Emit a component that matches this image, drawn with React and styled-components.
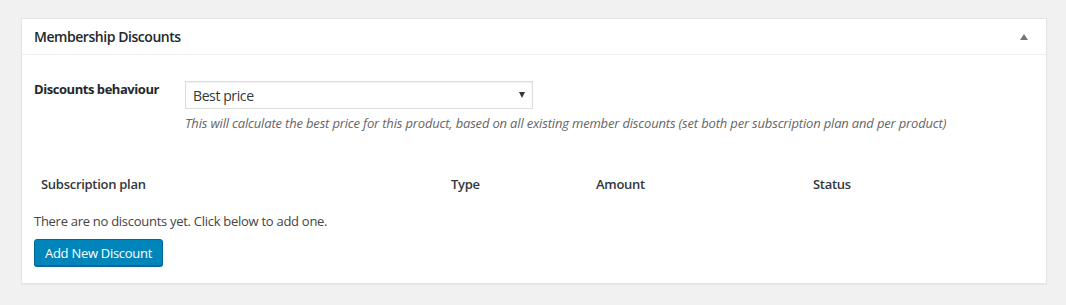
import React from "react";
import styled, { createGlobalStyle } from "styled-components";

const Global = createGlobalStyle`
  html, body { margin: 0; padding: 0; background: #f1f1f1; }
  body { font-family: "Open Sans", "Noto Sans", sans-serif; color: #23282d; font-size: 13px; letter-spacing: -0.28px; }
`;

const Page = styled.div`
  padding: 18px 19px 20px 21px;
`;

const Card = styled.div`
  background: #fff;
  border: 1px solid #e5e5e5;
  box-shadow: 0 1px 1px rgba(0,0,0,0.04);
`;

const Header = styled.div`
  display: flex;
  align-items: center;
  justify-content: space-between;
  height: 35px;
  padding: 0 12px;
  border-bottom: 1px solid #eee;
`;

const Title = styled.h2`
  margin: 0;
  font-size: 14px;
  font-weight: 600;
  letter-spacing: -0.45px;
  color: #23282d;
`;

const Toggle = styled.span`
  width: 0; height: 0;
  border-left: 4px solid transparent;
  border-right: 4px solid transparent;
  border-bottom: 6px solid #72777c;
  margin-right: 6px;
`;

const Body = styled.div`
  padding: 26px 12px 17px;
`;

const FieldRow = styled.div`
  display: flex;
  align-items: flex-start;
`;

const Label = styled.label`
  width: 151px;
  font-size: 13px;
  font-weight: 700;
  letter-spacing: -0.45px;
  line-height: 18px;
  margin-top: -1px;
  color: #23282d;
`;

const FieldCol = styled.div`
  display: flex;
  flex-direction: column;
`;

const Select = styled.div`
  width: 348px;
  height: 28px;
  box-sizing: border-box;
  border: 1px solid #ddd;
  box-shadow: inset 0 1px 2px rgba(0,0,0,0.07);
  display: flex;
  align-items: center;
  justify-content: space-between;
  padding: 0 7px 0 7px;
  font-size: 14px;
  letter-spacing: -0.4px;
  color: #32373c;
`;

const Arrow = styled.span`
  width: 0; height: 0;
  border-left: 3px solid transparent;
  border-right: 3px solid transparent;
  border-top: 6px solid #32373c;
`;

const Desc = styled.p`
  margin: 5px 0 0;
  font-size: 13px;
  font-style: italic;
  letter-spacing: -0.17px;
  color: #666;
  line-height: 18px;
`;

const TableHead = styled.div`
  display: grid;
  grid-template-columns: 410px 145px 217px 1fr;
  margin-top: 43px;
`;

const Th = styled.div`
  padding: 0 7px;
  font-size: 13px;
  font-weight: 600;
  line-height: 18px;
  color: #32373c;
`;

const Empty = styled.p`
  margin: 19px 0 0;
  font-size: 13px;
  line-height: 18px;
  color: #444;
`;

const Button = styled.button`
  margin-top: 9px;
  height: 27px;
  padding: 0 10px;
  background: #0085ba;
  border: 1px solid #006799;
  border-radius: 3px;
  box-shadow: 0 1px 0 #006799;
  color: #fff;
  font-family: inherit;
  letter-spacing: inherit;
  font-size: 13px;
  cursor: pointer;
`;

export default function App() {
  return (
    <>
      <Global />
      <Page>
        <Card>
          <Header>
            <Title>Membership Discounts</Title>
            <Toggle />
          </Header>
          <Body>
            <FieldRow>
              <Label>Discounts behaviour</Label>
              <FieldCol>
                <Select>
                  <span>Best price</span>
                  <Arrow />
                </Select>
                <Desc>This will calculate the best price for this product, based on all existing member discounts (set both per subscription plan and per product)</Desc>
              </FieldCol>
            </FieldRow>
            <TableHead>
              <Th>Subscription plan</Th>
              <Th>Type</Th>
              <Th>Amount</Th>
              <Th>Status</Th>
            </TableHead>
            <Empty>There are no discounts yet. Click below to add one.</Empty>
            <Button>Add New Discount</Button>
          </Body>
        </Card>
      </Page>
    </>
  );
}
